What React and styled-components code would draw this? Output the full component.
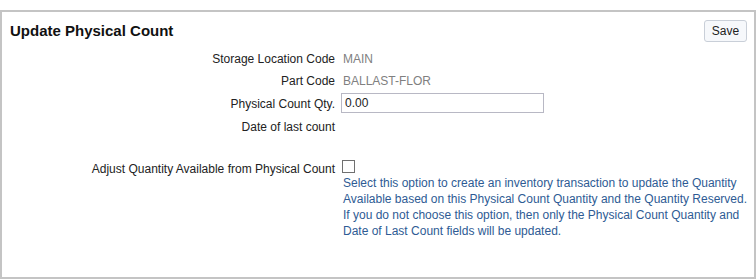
import React from 'react';
import styled, { createGlobalStyle } from 'styled-components';

const GlobalStyle = createGlobalStyle`
    body {
        margin: 0;
        background: white;
        font-family: "Liberation Sans", Arial, sans-serif;
        font-size: 12px;
        color: #222;
    }
`
const Panel = styled.div`
    box-sizing: border-box;
    margin-top: 10px;
    height: 269px;
    border: 2px solid #c4c4c4;
    background: white;
`
const Header = styled.div`
    display: flex;
    justify-content: space-between;
    align-items: center;
    padding: 8px 7px 0 8px;
`
const Title = styled.h2`
    margin: 0;
    font-size: 15px;
    font-weight: bold;
    line-height: 22px;
    color: #111;
`
const SaveButton = styled.button`
    height: 22px;
    width: 43px;
    padding: 0;
    font-family: inherit;
    font-size: 12px;
    color: #222;
    background: #f6f8fb;
    border: 1px solid #c9cfd8;
    border-radius: 3px;
`
const Form = styled.div`
    display: grid;
    grid-template-columns: 333px 1fr;
    column-gap: 8px;
    margin-top: 6px;
`
const Label = styled.div`
    text-align: right;
    line-height: 16px;
    padding-top: ${({top}) => top || 3}px;
    min-height: ${({h}) => h || 22}px;
    box-sizing: border-box;
`
const Value = styled.div`
    line-height: 16px;
    padding-top: ${({top}) => top || 3}px;
    min-height: ${({h}) => h || 22}px;
    box-sizing: border-box;
    color: #808080;
`
const Spacer = styled.div`
    grid-column: 1 / 3;
    height: 20px;
`
const QtyInput = styled.input`
    box-sizing: border-box;
    width: 203px;
    height: 20px;
    margin-left: -2px;
    padding: 0 3px;
    font-family: inherit;
    font-size: 12px;
    color: #222;
    border: 1px solid #b8b8c4;
    outline: none;
`
const Check = styled.input`
    display: block;
    width: 13px;
    height: 13px;
    margin: 0 0 2px -1px;
    appearance: none;
    border: 1px solid #707070;
    background: white;
`
const Help = styled.div`
    color: #2e5b94;
    line-height: 16px;
    white-space: nowrap;
`

const App = () => {
    return (
        <>
            <GlobalStyle />
            <Panel>
                <Header>
                    <Title>Update Physical Count</Title>
                    <SaveButton>Save</SaveButton>
                </Header>
                <Form>
                    <Label>Storage Location Code</Label>
                    <Value>MAIN</Value>
                    <Label>Part Code</Label>
                    <Value>BALLAST-FLOR</Value>
                    <Label top={4} h={24}>Physical Count Qty.</Label>
                    <Value top={1} h={24}><QtyInput defaultValue="0.00" /></Value>
                    <Label>Date of last count</Label>
                    <Value></Value>
                    <Spacer />
                    <Label>Adjust Quantity Available from Physical Count</Label>
                    <Value top={2}>
                        <Check type="checkbox" />
                        <Help>
                            Select this option to create an inventory transaction to update the Quantity<br />
                            Available based on this Physical Count Quantity and the Quantity Reserved.<br />
                            If you do not choose this option, then only the Physical Count Quantity and<br />
                            Date of Last Count fields will be updated.
                        </Help>
                    </Value>
                </Form>
            </Panel>
        </>
    )
}

export default App;
